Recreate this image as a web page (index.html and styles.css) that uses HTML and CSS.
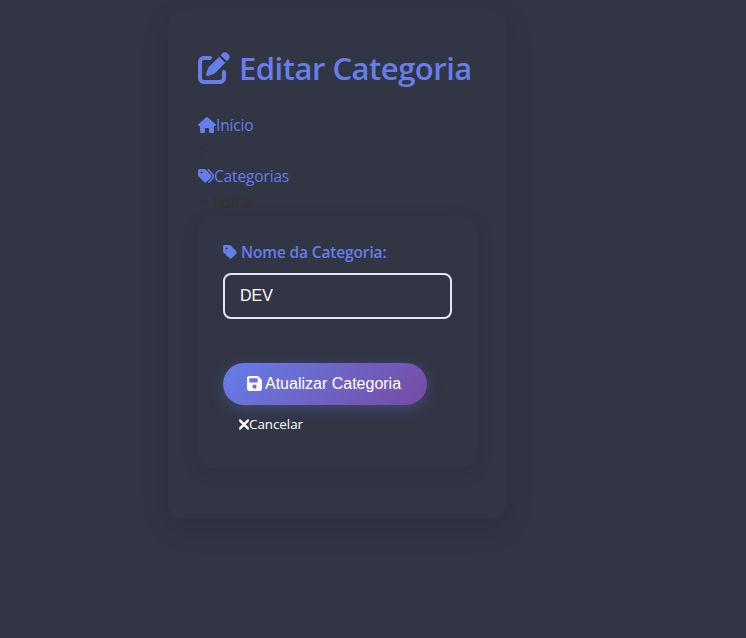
FILE: index.html
```html
<!DOCTYPE html>
<html lang="pt-BR">
<head>
<meta charset="utf-8">
<title>Editar Categoria</title>
<link rel="stylesheet" href="styles.css">
</head>
<body>
<main class="container">
  <h1 class="title"><svg class="icon-edit" viewBox="0 0 512 512"><path d="M471.6 21.7c-21.9-21.9-57.3-21.9-79.2 0L362.3 51.7l97.9 97.9 30.1-30.1c21.9-21.9 21.9-57.3 0-79.2L471.6 21.7zm-299.2 220c-6.1 6.1-10.8 13.6-13.5 21.9l-29.6 88.8c-2.9 8.6-.6 18.1 5.8 24.6s15.9 8.7 24.6 5.8l88.8-29.6c8.2-2.7 15.7-7.4 21.9-13.5L437.7 172.3 339.7 74.3 172.4 241.7zM96 64C43 64 0 107 0 160L0 416c0 53 43 96 96 96l256 0c53 0 96-43 96-96l0-96c0-17.7-14.3-32-32-32s-32 14.3-32 32l0 96c0 17.7-14.3 32-32 32L96 448c-17.7 0-32-14.3-32-32l0-256c0-17.7 14.3-32 32-32l96 0c17.7 0 32-14.3 32-32s-14.3-32-32-32L96 64z"/></svg><span>Editar Categoria</span></h1>
  <nav class="breadcrumb">
    <a class="crumb" href="#"><svg class="icon-home" viewBox="0 0 576 512"><path d="M575.8 255.5c0 18-15 32.1-32 32.1l-32 0 .7 160.2c0 2.7-.2 5.4-.5 8.1l0 16.2c0 22.1-17.9 40-40 40l-16 0c-1.1 0-2.2 0-3.3-.1c-1.4 .1-2.8 .1-4.2 .1L416 512l-24 0c-22.1 0-40-17.9-40-40l0-24 0-64c0-17.7-14.3-32-32-32l-64 0c-17.7 0-32 14.3-32 32l0 64 0 24c0 22.1-17.9 40-40 40l-24 0-31.9 0c-1.5 0-3-.1-4.5-.2c-1.2 .1-2.4 .2-3.6 .2l-16 0c-22.1 0-40-17.9-40-40l0-112c0-.9 0-1.9 .1-2.8l0-69.7-32 0c-18 0-32-14-32-32.1c0-9 3-17 10-24L266.4 8c7-7 15-8 22-8s15 2 21 7L564.8 231.5c8 7 12 15 11 24z"/></svg><span class="home-text">Início</span></a>
    <div class="separator"><span class="arrow">&gt;</span></div>
    <a class="crumb" href="#"><svg class="icon-tags" viewBox="0 0 512 512"><path d="M345 39.1L472.8 168.4c52.4 53 52.4 138.2 0 191.2L360.8 472.9c-9.3 9.4-24.5 9.5-33.9 .2s-9.5-24.5-.2-33.9L438.6 325.9c33.9-34.3 33.9-89.4 0-123.7L310.9 72.9c-9.3-9.4-9.2-24.6 .2-33.9s24.6-9.2 33.9 .2zM0 229.5L0 80C0 53.5 21.5 32 48 32l149.5 0c17 0 33.3 6.7 45.3 18.7l168 168c25 25 25 65.5 0 90.5L277.3 442.7c-25 25-65.5 25-90.5 0l-168-168C6.7 262.7 0 246.5 0 229.5zM144 144a32 32 0 1 0 -64 0 32 32 0 1 0 64 0z"/></svg><span class="tags-text">Categorias</span></a>
    <div class="separator"><span class="arrow">&gt;</span><span class="current">Editar</span></div>
  </nav>
  <form class="form">
    <label class="label" for="nome"><svg class="icon-tag" viewBox="0 0 448 512"><path d="M0 80L0 229.5c0 17 6.7 33.3 18.7 45.3l176 176c25 25 65.5 25 90.5 0L418.7 317.3c25-25 25-65.5 0-90.5l-176-176c-12-12-28.3-18.7-45.3-18.7L48 32C21.5 32 0 53.5 0 80zm112 32a32 32 0 1 1 0 64 32 32 0 1 1 0-64z"/></svg><span>Nome da Categoria:</span></label>
    <input class="input" id="nome" type="text" value="DEV">
    <button class="submit" type="button"><svg class="icon-save" viewBox="0 0 448 512"><path d="M64 32C28.7 32 0 60.7 0 96L0 416c0 35.3 28.7 64 64 64l320 0c35.3 0 64-28.7 64-64l0-242.7c0-17-6.7-33.3-18.7-45.3L352 50.7C340 38.7 323.7 32 306.7 32L64 32zm0 96c0-17.7 14.3-32 32-32l192 0c17.7 0 32 14.3 32 32l0 64c0 17.7-14.3 32-32 32L96 224c-17.7 0-32-14.3-32-32l0-64zM224 288a64 64 0 1 1 0 128 64 64 0 1 1 0-128z"/></svg><span>Atualizar Categoria</span></button>
    <a class="cancel" href="#"><svg class="icon-times" viewBox="32 80 320 352"><path d="M342.6 150.6c12.5-12.5 12.5-32.8 0-45.3s-32.8-12.5-45.3 0L192 210.7 86.6 105.4c-12.5-12.5-32.8-12.5-45.3 0s-12.5 32.8 0 45.3L146.7 256 41.4 361.4c-12.5 12.5-12.5 32.8 0 45.3s32.8 12.5 45.3 0L192 301.3 297.4 406.6c12.5 12.5 32.8 12.5 45.3 0s12.5-32.8 0-45.3L237.3 256 342.6 150.6z"/></svg><span>Cancelar</span></a>
  </form>
</main>
</body>
</html>
```
FILE: styles.css
```css
* { box-sizing: border-box; }
body {
  display: flow-root;
  margin: 0;
  min-height: 638px;
  background: #323544;
  color: #333;
  font: 15.5px/25.6px "Open Sans", "Noto Sans", sans-serif;
}
svg { display: block; flex: none; fill: currentColor; }
a { text-decoration: none; }
.container {
  width: 339px;
  height: 508px;
  margin: 10px 0 0 168px;
  padding: 30px;
  border-radius: 15px;
  background: #323544;
  box-shadow: 0 10px 30px rgba(0, 0, 0, 0.1);
}
.title {
  display: flex;
  align-items: center;
  height: 58px;
  margin: 0 0 15px;
  color: #667eea;
  font-size: 31px;
  font-weight: 600;
  line-height: 58px;
  white-space: nowrap;
}
.title span { margin: 0 0 2px 9px; letter-spacing: -0.5px; }
.icon-edit { width: 32px; height: 32px; margin-bottom: 2px; }
.breadcrumb { height: 103px; }
.crumb, .separator { display: flex; align-items: center; height: 25.6px; }
.crumb { color: #667eea; letter-spacing: -0.15px; }
.icon-home { width: 18px; height: 16px; margin-bottom: 1px; }
.icon-tags { width: 16px; height: 16px; margin-bottom: 2px; }
.separator { padding-left: 1px; letter-spacing: -0.15px; }
.current { margin-left: 5px; }
.form {
  width: 279px;
  height: 252px;
  padding: 25px;
  border-radius: 15px;
  background: #323544;
  box-shadow: 0 5px 20px rgba(0, 0, 0, 0.08);
}
.label {
  display: flex;
  align-items: center;
  height: 24px;
  margin-bottom: 8px;
  color: #667eea;
  font-weight: 600;
  letter-spacing: -0.15px;
  white-space: nowrap;
}
.label span { margin-left: 4px; }
.icon-tag { width: 14px; height: 16px; margin-bottom: 2px; }
.input {
  display: block;
  width: 229px;
  height: 46px;
  padding: 0 15px;
  border: 2px solid #e2e8f0;
  border-radius: 8px;
  background: transparent;
  color: #fff;
  font: 16px "Liberation Sans", sans-serif;
  outline: none;
}
.submit {
  display: flex;
  align-items: center;
  width: 204px;
  height: 42px;
  margin-top: 44px;
  padding: 0 0 0 24px;
  border: 0;
  border-radius: 25px;
  background: linear-gradient(135deg, #667eea 0%, #764ba2 100%);
  box-shadow: 0 4px 15px rgba(102, 126, 234, 0.3);
  color: #fff;
  font: 16px "Liberation Sans", sans-serif;
  white-space: nowrap;
}
.submit span { margin-left: 3px; }
.icon-save { width: 15px; height: 17px; margin-bottom: 2px; }
.cancel {
  display: flex;
  align-items: center;
  height: 20px;
  margin: 10px 0 0 16px;
  color: #fff;
  font-size: 13.33px;
}
.icon-times {
  width: 10px;
  height: 11px;
  margin-bottom: 2px;
  stroke: currentColor;
  stroke-width: 18px;
}
```
